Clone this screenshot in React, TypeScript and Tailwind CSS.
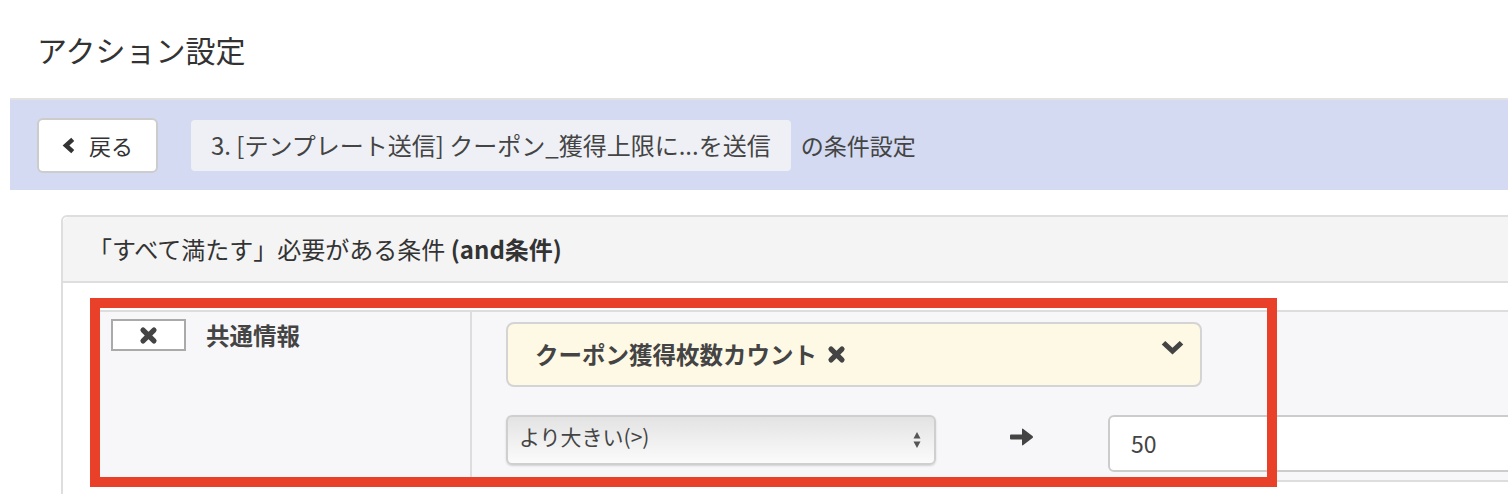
import React from 'react';

const ChevronLeft = () => (
  <svg viewBox="0 0 16 16" className="w-[17px] h-[17px] stroke-[#333]" fill="none">
    <path d="M12 2.2 L5.6 8 L12 13.8" strokeWidth="4.2" strokeLinejoin="miter" strokeLinecap="butt" />
  </svg>
);

const ChevronDown = () => (
  <svg viewBox="0 0 24 16" className="w-[23px] h-[15px] fill-[#444]">
    <path d="M0.5 4.8 L4.3 1 L12 8.3 L19.7 1 L23.5 4.8 L12 15.5 Z" />
  </svg>
);

const Times = ({ size = 18 }: { size?: number }) => (
  <svg viewBox="0 0 16 16" width={size} height={size} className="stroke-[#444]" fill="none">
    <path d="M3.4 3.4 L12.6 12.6 M12.6 3.4 L3.4 12.6" strokeWidth="4.4" strokeLinecap="round" />
  </svg>
);

const ArrowRight = () => (
  <svg viewBox="0 0 24 20" className="w-[24px] h-[20px] fill-[#444]">
    <path d="M1 7.5 H12 V2.5 Q12 1 13.3 2 L22.5 9 Q23.5 10 22.5 11 L13.3 18 Q12 19 12 17.5 V12.5 H1 Q0 12.5 0 11.5 V8.5 Q0 7.5 1 7.5 Z" />
  </svg>
);

const Spinner = () => (
  <svg viewBox="0 0 8 18" className="w-[8px] h-[18px] fill-[#555]">
    <path d="M4 1 L7.5 7.5 H0.5 Z M4 17 L7.5 10.5 H0.5 Z" />
  </svg>
);

export default function App() {
  return (
    <div className="relative w-[1508px] h-[494px] overflow-hidden bg-white text-[#333] font-['Noto_Sans_CJK_JP','Noto_Sans',sans-serif]">
      {/* page title */}
      <div className="h-[98px] flex items-center pl-[37px] text-[30px] leading-none text-[#333]">アクション設定</div>

      {/* breadcrumb band */}
      <div className="ml-[10px] h-[92px] border-t-2 border-[#e2e2e2] bg-[#d3daf1] flex items-center pl-[27px] text-[#444]">
        <button className="h-[55px] w-[121px] flex items-center pl-[21px] gap-[12px] bg-white border-2 border-[#cccccc] rounded-md text-[22px] text-[#333]">
          <ChevronLeft />
          <span>戻る</span>
        </button>
        <div className="ml-[33px] h-[51px] px-[20px] flex items-center bg-[#eef0f6] rounded-[4px] text-[24px] whitespace-nowrap">
          3. [テンプレート送信] クーポン_獲得上限に...を送信
        </div>
        <span className="ml-[10px] text-[23px]">の条件設定</span>
      </div>

      {/* condition panel */}
      <div className="ml-[61px] mt-[25px] w-[1500px] h-[300px] border-2 border-[#dedede] rounded-tl-md">
        <div className="h-[66px] bg-[#f4f4f4] border-b-2 border-[#dedede] flex items-center pl-[25px] text-[24px] text-[#333] rounded-tl-md">
          「すべて満たす」必要がある条件&nbsp;<span className="font-bold">(and条件)</span>
        </div>
        <div className="pt-[27px] pl-[29px]">
          <div className="flex border-t-2 border-b-2 border-[#dddddd] bg-[#f7f7f9]">
            <div className="w-[380px] border-r-2 border-[#dddddd] flex items-start pt-[7px] pl-[19px] gap-[20px]">
              <button className="w-[75px] h-[32px] flex items-center justify-center bg-white border-2 border-[#aaaaaa]">
                <Times size={19} />
              </button>
              <span className="text-[23.5px] leading-[32px] font-bold text-[#444]">共通情報</span>
            </div>
            <div className="flex-1 pl-[34px] pt-[10px] pb-[8px]">
              <div className="w-[696px] h-[65px] flex items-center justify-between pl-[27px] pr-[16px] bg-[#fef9e4] border-2 border-[#d4d4d4] rounded-lg">
                <div className="flex items-center gap-[10px] text-[23.5px] font-bold text-[#444]">
                  <span>クーポン獲得枚数カウント</span>
                  <Times size={19} />
                </div>
                <div className="-mt-[14px]">
                  <ChevronDown />
                </div>
              </div>
              <div className="mt-[28px] flex items-start">
                <div className="w-[430px] h-[50px] flex items-center justify-between pl-[11px] pr-[13px] rounded-md border-2 border-[#cfcfcf] bg-gradient-to-b from-[#e3e3e3] to-[#fbfbfb] shadow-[0_1px_2px_rgba(0,0,0,0.15)] text-[21px] text-[#444]">
                  <span className="-mt-[6px]">より大きい(&gt;)</span>
                  <Spinner />
                </div>
                <div className="w-[172px] h-[44px] flex items-center justify-center">
                  <ArrowRight />
                </div>
                <div className="flex-1 h-[57px] flex items-center pl-[21px] bg-white border-2 border-[#cccccc] rounded-md text-[23px] text-[#444]">
                  50
                </div>
              </div>
            </div>
          </div>
        </div>
      </div>

      {/* highlight annotation */}
      <div className="absolute left-[90px] top-[298px] w-[1187px] h-[189px] border-[10px] border-[#e9402a] pointer-events-none" />
    </div>
  );
}
